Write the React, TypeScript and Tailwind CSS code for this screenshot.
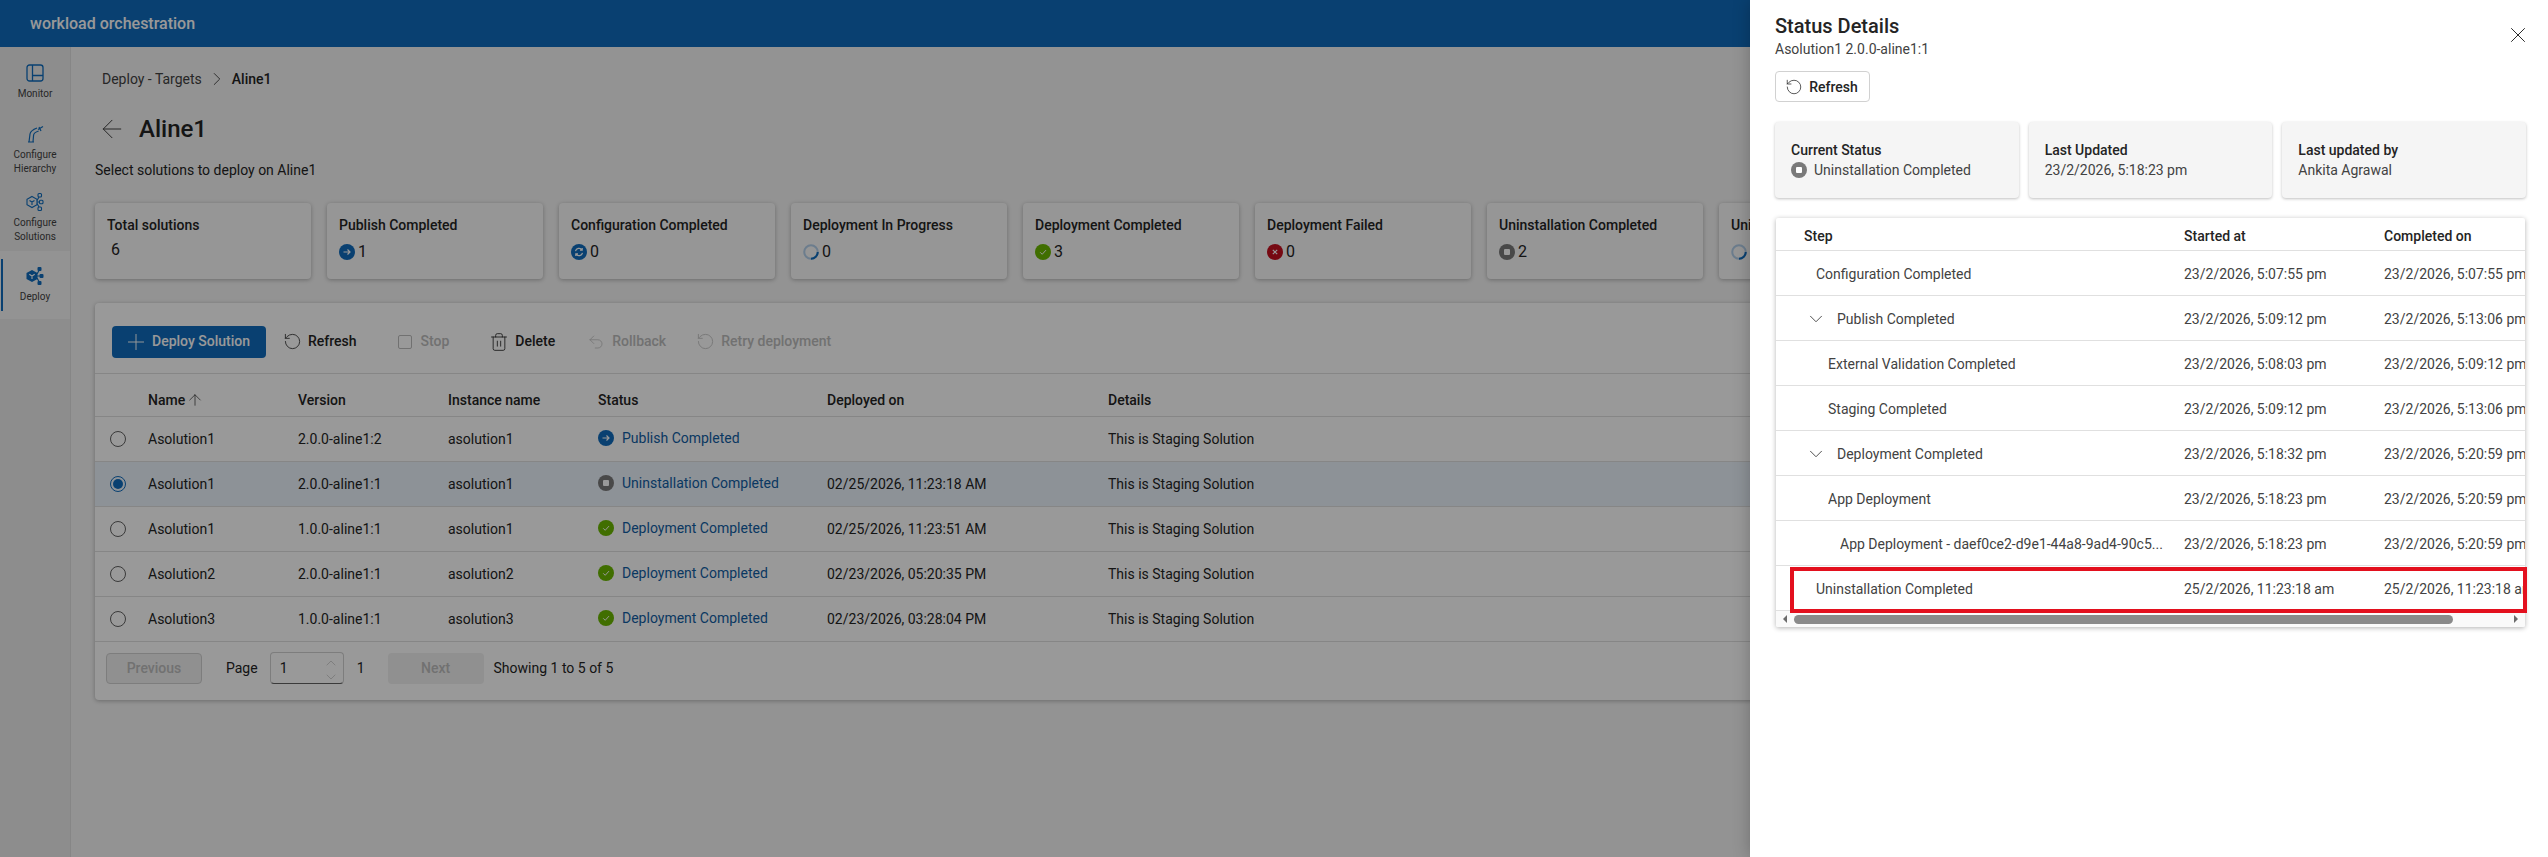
import { ArrowLeft, ArrowUp, ChevronDown, ChevronRight, ChevronUp, Plus, RotateCcw, Trash2, Undo2, X } from "lucide-react"

type Kind = "publish" | "config" | "progress" | "done" | "failed" | "uninstall"

// small status badges used by the cards and the tables
function StatusIcon({ kind }: { kind: Kind }) {
  if (kind === "progress") {
    return (
      <svg width="16" height="16" viewBox="0 0 16 16" className="shrink-0">
        <circle cx="8" cy="8" r="6.75" fill="none" stroke="#b4d0ec" strokeWidth="2" />
        <path d="M14.75 8A6.75 6.75 0 0 1 8 14.75" fill="none" stroke="#0f6cbd" strokeWidth="2" />
      </svg>
    )
  }
  const fill = { publish: "#0f6cbd", config: "#0f6cbd", done: "#6bb700", failed: "#c50f1f", uninstall: "#7a7a7a" }[kind]
  return (
    <svg width="16" height="16" viewBox="0 0 16 16" className="shrink-0">
      <circle cx="8" cy="8" r="8" fill={fill} />
      {kind === "publish" && <path d="M4.5 8h6.5M8.5 5.5 11 8l-2.5 2.5" fill="none" stroke="#fff" strokeWidth="1.2" />}
      {kind === "config" && (
        <path d="M4.5 7.2A3.6 3.6 0 0 1 11 6M11.5 8.8A3.6 3.6 0 0 1 5 10M11.2 4v2.2H9M4.8 12V9.8H7" fill="none" stroke="#fff" strokeWidth="1.2" />
      )}
      {kind === "done" && <path d="m5.2 8.3 2 2 3.8-4.2" fill="none" stroke="#fff" strokeWidth="1" />}
      {kind === "failed" && <path d="m5.8 5.8 4.4 4.4m0-4.4-4.4 4.4" fill="none" stroke="#fff" strokeWidth="1.2" />}
      {kind === "uninstall" && <rect x="5" y="5" width="6" height="6" rx="1" fill="#fff" />}
    </svg>
  )
}

function MonitorIcon() {
  return (
    <svg width="20" height="20" viewBox="0 0 20 20" fill="none" stroke="#0f6cbd" strokeWidth="1.3">
      <rect x="2" y="2" width="16" height="16" rx="2.5" />
      <path d="M7.5 2v16M7.5 12.5H18" />
    </svg>
  )
}

function HierarchyIcon() {
  return (
    <svg width="20" height="20" viewBox="0 0 20 20" fill="none" stroke="#0f6cbd" strokeWidth="1.2">
      <path d="M3 18h6M4 18l1-8c.4-2.5 3-4.500 7-6M8 18l.6-7c.2-1.500 2-3 5-4" />
      <path d="m13 5.500 5-3M14 3l2 4" />
    </svg>
  )
}

function SolutionsIcon() {
  return (
    <svg width="20" height="20" viewBox="0 0 20 20" fill="none" stroke="#0f6cbd" strokeWidth="1.1">
      <path d="m7 4.500 5 2.800v5.400l-5 2.800-5-2.800V7.300z" />
      <path d="M4.500 8.500 7 10l2.500-1.500M7 10v3" />
      <rect x="13" y="1.500" width="3.500" height="3.500" rx="1" />
      <rect x="14.500" y="8.200" width="3.500" height="3.500" rx="1" />
      <rect x="13" y="15" width="3.500" height="3.500" rx="1" />
      <path d="M12 8.500 14 5M12 10h2.500M12 11.500l2 3.500" />
    </svg>
  )
}

function DeployIcon() {
  return (
    <svg width="20" height="20" viewBox="0 0 20 20" fill="#0f6cbd">
      <path d="m7 4 5.500 3v6L7 16l-5.500-3V7z" />
      <path d="M4.300 8.300 7 10l2.700-1.700M7 10v3" fill="none" stroke="#fff" strokeWidth="1.100" />
      <rect x="12.500" y="1" width="4" height="4" rx="1" />
      <rect x="14.500" y="8" width="4" height="4" rx="1" />
      <rect x="12.500" y="15" width="4" height="4" rx="1" />
      <path d="M12 8 14 4.500M12 10h3M12 12l2 3.500" fill="none" stroke="#0f6cbd" strokeWidth="1.200" />
    </svg>
  )
}

function NavItem({ icon, lines, height, active }: { icon: React.ReactNode; lines: string[]; height: string; active?: boolean }) {
  return (
    <div className={`relative flex flex-col items-center justify-center ${height} ${active ? "bg-[#f5f5f5]" : ""}`}>
      {active && <div className="absolute left-[1px] top-[8px] bottom-[8px] w-[2px] bg-[#0f6cbd]" />}
      {icon}
      <div className="mt-[4px] text-center text-[10px] leading-[14px] text-[#424242]">
        {lines.map((l) => (
          <div key={l}>{l}</div>
        ))}
      </div>
    </div>
  )
}

const summary: { title: string; value: number; kind?: Kind }[] = [
  { title: "Total solutions", value: 6 },
  { title: "Publish Completed", value: 1, kind: "publish" },
  { title: "Configuration Completed", value: 0, kind: "config" },
  { title: "Deployment In Progress", value: 0, kind: "progress" },
  { title: "Deployment Completed", value: 3, kind: "done" },
  { title: "Deployment Failed", value: 0, kind: "failed" },
  { title: "Uninstallation Completed", value: 2, kind: "uninstall" },
  { title: "Uninstallation In Progress", value: 0, kind: "progress" },
]

const solutions: { name: string; version: string; instance: string; status: string; kind: Kind; deployed: string; selected?: boolean }[] = [
  { name: "Asolution1", version: "2.0.0-aline1:2", instance: "asolution1", status: "Publish Completed", kind: "publish", deployed: "" },
  { name: "Asolution1", version: "2.0.0-aline1:1", instance: "asolution1", status: "Uninstallation Completed", kind: "uninstall", deployed: "02/25/2026, 11:23:18 AM", selected: true },
  { name: "Asolution1", version: "1.0.0-aline1:1", instance: "asolution1", status: "Deployment Completed", kind: "done", deployed: "02/25/2026, 11:23:51 AM" },
  { name: "Asolution2", version: "2.0.0-aline1:1", instance: "asolution2", status: "Deployment Completed", kind: "done", deployed: "02/23/2026, 05:20:35 PM" },
  { name: "Asolution3", version: "1.0.0-aline1:1", instance: "asolution3", status: "Deployment Completed", kind: "done", deployed: "02/23/2026, 03:28:04 PM" },
]

const steps: { step: string; pad: string; start: string; end: string; chevron?: boolean }[] = [
  { step: "Configuration Completed", pad: "pl-[40px]", start: "23/2/2026, 5:07:55 pm", end: "23/2/2026, 5:07:55 pm" },
  { step: "Publish Completed", pad: "pl-[34px]", start: "23/2/2026, 5:09:12 pm", end: "23/2/2026, 5:13:06 pm", chevron: true },
  { step: "External Validation Completed", pad: "pl-[52px]", start: "23/2/2026, 5:08:03 pm", end: "23/2/2026, 5:09:12 pm" },
  { step: "Staging Completed", pad: "pl-[52px]", start: "23/2/2026, 5:09:12 pm", end: "23/2/2026, 5:13:06 pm" },
  { step: "Deployment Completed", pad: "pl-[34px]", start: "23/2/2026, 5:18:32 pm", end: "23/2/2026, 5:20:59 pm", chevron: true },
  { step: "App Deployment", pad: "pl-[52px]", start: "23/2/2026, 5:18:23 pm", end: "23/2/2026, 5:20:59 pm" },
  { step: "App Deployment - daef0ce2-d9e1-44a8-9ad4-90c5...", pad: "pl-[64px]", start: "23/2/2026, 5:18:23 pm", end: "23/2/2026, 5:20:59 pm" },
  { step: "Uninstallation Completed", pad: "pl-[40px]", start: "25/2/2026, 11:23:18 am", end: "25/2/2026, 11:23:18 am" },
]

const solutionCols = "grid grid-cols-[53px_150px_150px_150px_229px_281px_1fr] items-center"
const stepCols = "grid grid-cols-[408px_200px_200px] items-center w-[808px]"

export default function App() {
  return (
    <div className="relative flex h-[857px] w-[2548px] flex-col overflow-hidden bg-[#f5f5f5] text-[14px] text-[#242424] font-['Roboto',sans-serif]">
      <header className="flex h-[47px] shrink-0 items-center bg-[#0f6cbd] pl-[30px] text-[16px] font-medium text-white">
        workload orchestration
      </header>
      <div className="flex min-h-0 flex-1">
        {/* Left nav */}
        <nav className="w-[71px] shrink-0 border-r border-[#e0e0e0] bg-[#ebebeb]">
          <NavItem icon={<MonitorIcon />} lines={["Monitor"]} height="h-[69px]" />
          <NavItem icon={<HierarchyIcon />} lines={["Configure", "Hierarchy"]} height="h-[68px]" />
          <NavItem icon={<SolutionsIcon />} lines={["Configure", "Solutions"]} height="h-[67px]" />
          <NavItem icon={<DeployIcon />} lines={["Deploy"]} height="h-[68px]" active />
        </nav>

        {/* Page */}
        <main className="min-w-0 flex-1 pl-[24px]">
          <div className="mt-[22px] flex h-[20px] items-center gap-[8px] pl-[7px]">
            <span className="text-[#424242]">Deploy - Targets</span>
            <ChevronRight size={22} strokeWidth={1} className="-mx-[4px] text-[#424242]" />
            <span className="font-medium">Aline1</span>
          </div>
          <div className="mt-[24px] flex h-[32px] items-center pl-[7px]">
            <ArrowLeft size={30} strokeWidth={0.8} className="-mx-[5px] text-[#424242]" />
            <h1 className="ml-[17px] text-[24px] font-medium leading-[32px]">Aline1</h1>
          </div>
          <p className="mt-[15px] h-[20px] leading-[20px]">Select solutions to deploy on Aline1</p>

          <div className="mt-[23px] flex gap-[16px]">
            {summary.map((c) => (
              <div key={c.title} className="h-[76px] w-[216px] shrink-0 rounded-[4px] bg-[#fafafa] pl-[12px] pt-[12px] shadow-[0_1px_4px_rgba(0,0,0,0.28)]">
                <div className="h-[20px] truncate font-medium leading-[20px]">{c.title}</div>
                {c.kind ? (
                  <div className="mt-[7px] flex items-center gap-[3px] text-[16px] leading-[20px]">
                    <StatusIcon kind={c.kind} />
                    {c.value}
                  </div>
                ) : (
                  <div className="mt-[5px] pl-[4px] text-[16px] leading-[20px]">{c.value}</div>
                )}
              </div>
            ))}
          </div>

          {/* Solutions table */}
          <section className="mt-[24px] h-[397px] w-[2100px] rounded-[4px] bg-white shadow-[0_1px_4px_rgba(0,0,0,0.28)]">
            <div className="flex h-[71px] items-center border-b border-[#e0e0e0] pl-[17px] pt-[7px] font-medium">
              <button className="flex h-[32px] w-[154px] items-center justify-center gap-[8px] rounded-[4px] bg-[#0f6cbd] text-white">
                <Plus size={26} strokeWidth={0.9} className="-mx-[5px]" />
                Deploy Solution
              </button>
              <div className="ml-[19px] flex items-center gap-[8px]">
                <RotateCcw size={19} strokeWidth={1} className="-mx-[2px]" />
                Refresh
              </div>
              <div className="ml-[41px] flex items-center gap-[9px] text-[#bdbdbd]">
                <div className="h-[14px] w-[14px] rounded-[2px] border border-[#bdbdbd]" />
                Stop
              </div>
              <div className="ml-[41px] flex items-center gap-[7px]">
                <Trash2 size={20} strokeWidth={1} className="-mx-[1px]" />
                Delete
              </div>
              <div className="ml-[34px] flex items-center gap-[9px] text-[#bdbdbd]">
                <Undo2 size={18} strokeWidth={1} className="-mx-[2px]" />
                Rollback
              </div>
              <div className="ml-[32px] flex items-center gap-[8px] text-[#bdbdbd]">
                <RotateCcw size={19} strokeWidth={1} className="-mx-[2px]" />
                Retry deployment
              </div>
            </div>

            <div className={`${solutionCols} h-[43px] border-b border-[#e0e0e0] pt-[10px] font-medium`}>
              <div />
              <div className="flex items-center gap-[4px]">
                Name <ArrowUp size={18} strokeWidth={0.9} className="-mx-[3px]" />
              </div>
              <div>Version</div>
              <div>Instance name</div>
              <div>Status</div>
              <div>Deployed on</div>
              <div>Details</div>
            </div>

            {solutions.map((s) => (
              <div key={s.name + s.version} className={`${solutionCols} h-[45px] border-b border-[#e0e0e0] ${s.selected ? "bg-[#ebf3fc]" : ""}`}>
                <div className="pl-[15px]">
                  {s.selected ? (
                    <div className="flex h-[16px] w-[16px] items-center justify-center rounded-full border border-[#0f6cbd]">
                      <div className="h-[10px] w-[10px] rounded-full bg-[#0f6cbd]" />
                    </div>
                  ) : (
                    <div className="h-[16px] w-[16px] rounded-full border border-[#616161]" />
                  )}
                </div>
                <div>{s.name}</div>
                <div>{s.version}</div>
                <div>{s.instance}</div>
                <div className="-mt-[2px] flex items-center gap-[8px] text-[#115ea3]">
                  <StatusIcon kind={s.kind} />
                  {s.status}
                </div>
                <div>{s.deployed}</div>
                <div>This is Staging Solution</div>
              </div>
            ))}

            <div className="mt-[10px] flex items-center pl-[11px]">
              <div className="flex h-[31px] w-[96px] items-center justify-center rounded-[4px] border border-[#d1d1d1] bg-[#f0f0f0] font-medium text-[#bdbdbd]">Previous</div>
              <span className="ml-[24px]">Page</span>
              <div className="relative ml-[12px] flex h-[32px] w-[74px] items-center rounded-[4px] border border-[#d1d1d1] border-b-[#616161] pl-[9px]">
                1
                <div className="absolute right-[4px] top-[3px] flex flex-col text-[#bdbdbd]">
                  <ChevronUp size={16} strokeWidth={1} className="-my-[1px]" />
                  <ChevronDown size={16} strokeWidth={1} className="-my-[1px]" />
                </div>
              </div>
              <span className="ml-[13px]">1</span>
              <div className="ml-[23px] flex h-[31px] w-[96px] items-center justify-center rounded-[4px] bg-[#f0f0f0] font-medium text-[#bdbdbd]">Next</div>
              <span className="ml-[10px]">Showing 1 to 5 of 5</span>
            </div>
          </section>
        </main>
      </div>

      {/* Dimmed backdrop */}
      <div className="absolute inset-0 bg-black/40" />

      {/* Status drawer */}
      <aside className="absolute right-0 top-0 h-full w-[798px] bg-white pl-[25px] pr-[22px] shadow-[0_0_16px_rgba(0,0,0,0.25)]">
        <X size={26} strokeWidth={0.9} className="absolute right-[17px] top-[22px] text-[#242424]" />
        <h2 className="pt-[12px] text-[20px] font-medium leading-[28px]">Status Details</h2>
        <p className="h-[20px] leading-[18px] text-[#424242]">Asolution1 2.0.0-aline1:1</p>
        <button className="mt-[11px] flex h-[31px] w-[95px] items-center justify-center gap-[8px] rounded-[4px] border border-[#d1d1d1] pt-[1px] font-medium">
          <RotateCcw size={18} strokeWidth={1} className="-mx-[2px]" />
          Refresh
        </button>

        <div className="mt-[20px] grid grid-cols-3 gap-[10px]">
          <div className="h-[76px] rounded-[4px] bg-[#f5f5f5] pl-[16px] pt-[18px] shadow-[0_1px_3px_rgba(0,0,0,0.25)]">
            <div className="font-medium leading-[20px]">Current Status</div>
            <div className="flex items-center gap-[7px] leading-[20px] text-[#424242]">
              <StatusIcon kind="uninstall" />
              Uninstallation Completed
            </div>
          </div>
          <div className="h-[76px] rounded-[4px] bg-[#f5f5f5] pl-[16px] pt-[18px] shadow-[0_1px_3px_rgba(0,0,0,0.25)]">
            <div className="font-medium leading-[20px]">Last Updated</div>
            <div className="leading-[20px] text-[#424242]">23/2/2026, 5:18:23 pm</div>
          </div>
          <div className="h-[76px] rounded-[4px] bg-[#f5f5f5] pl-[16px] pt-[18px] shadow-[0_1px_3px_rgba(0,0,0,0.25)]">
            <div className="font-medium leading-[20px]">Last updated by</div>
            <div className="leading-[20px] text-[#424242]">Ankita Agrawal</div>
          </div>
        </div>

        {/* Steps table */}
        <div className="relative mt-[20px] ml-[1px] w-[749px]">
          <div className="overflow-hidden rounded-[2px] bg-white shadow-[0_1px_5px_rgba(0,0,0,0.3)]">
            <div className={`${stepCols} h-[33px] border-b border-[#e0e0e0] pt-[5px] font-medium`}>
              <div className="pl-[28px]">Step</div>
              <div>Started at</div>
              <div>Completed on</div>
            </div>
            {steps.map((r) => (
              <div key={r.step + r.start} className={`${stepCols} h-[45px] border-b border-[#e0e0e0] pt-[2px] text-[#424242]`}>
                <div className={`flex items-center gap-[15px] truncate ${r.pad}`}>
                  {r.chevron && <ChevronDown size={22} strokeWidth={1} className="-mx-[5px] shrink-0" />}
                  <span className="truncate">{r.step}</span>
                </div>
                <div>{r.start}</div>
                <div>{r.end}</div>
              </div>
            ))}
            <div className="flex h-[16px] items-center bg-[#fafafa] px-[5px]">
              <svg width="8" height="10" viewBox="0 0 8 10" className="shrink-0"><path d="M6 1 2 5l4 4z" fill="#6b6b6b" /></svg>
              <div className="ml-[5px] h-[9px] w-[659px] rounded-full bg-[#8a8a8a]" />
              <svg width="8" height="10" viewBox="0 0 8 10" className="ml-auto shrink-0"><path d="m2 1 4 4-4 4z" fill="#6b6b6b" /></svg>
            </div>
          </div>
          {/* Red callout */}
          <div className="absolute left-[14px] top-[349px] h-[46px] w-[737px] border-[4px] border-[#e3101e]" />
        </div>
      </aside>
    </div>
  )
}
